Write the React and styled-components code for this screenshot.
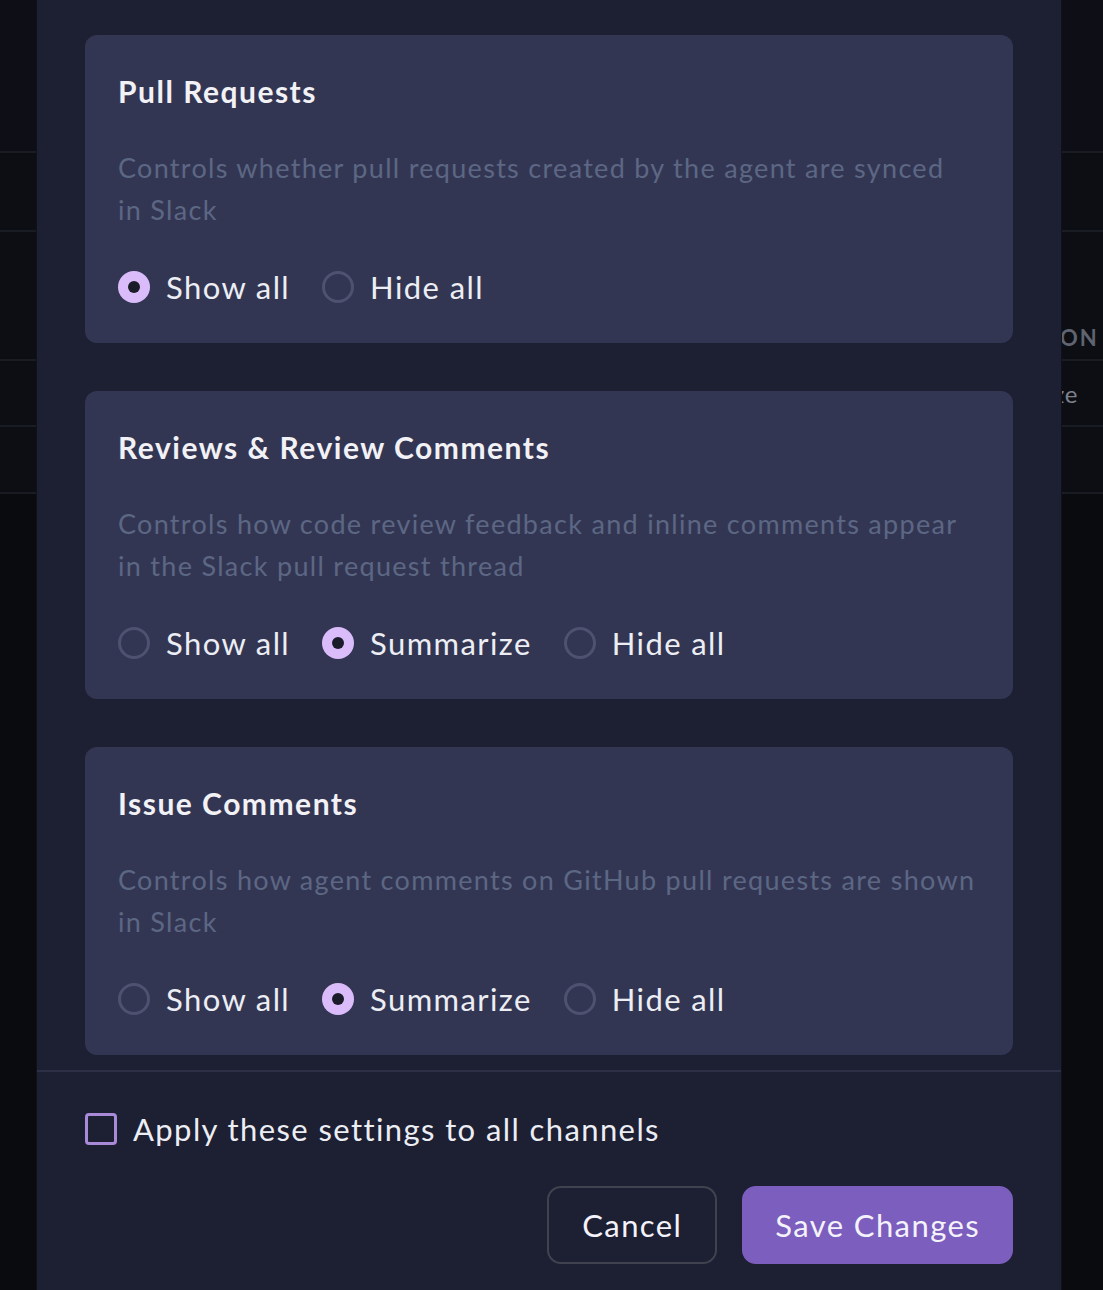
import React, { useState } from 'react';
import styled, { createGlobalStyle } from 'styled-components';

const GlobalStyle = createGlobalStyle`
  html, body {
    margin: 0;
    padding: 0;
    background: #0b0c10;
  }
  * {
    box-sizing: border-box;
  }
`

const Screen = styled.div`
  position: relative;
  width: 1103px;
  height: 1290px;
  overflow: hidden;
  font-family: Lato, "Noto Sans", sans-serif;
  background: #0a0b0e;
`

// the page that sits behind the dialog
const Backdrop = styled.div`
  display: flex;
  flex-direction: column;
`
const PageHead = styled.div`
  height: 153px;
  background: #0e0f16;
  border-bottom: 2px solid #1a1c24;
`
const BgRow = styled.div`
  height: ${p => p.$h}px;
  display: flex;
  align-items: ${p => (p.$head ? 'flex-end' : 'center')};
  padding-bottom: ${p => (p.$head ? '8px' : '0')};
  background: #0d0e14;
  border-bottom: 2px solid #1a1c24;
`
const BgCell = styled.div`
  margin-left: ${p => p.$left}px;
  color: ${p => (p.$head ? '#5f6470' : '#7d828d')};
  font-size: ${p => (p.$head ? '22px' : '24px')};
  font-weight: ${p => (p.$head ? 700 : 400)};
  letter-spacing: ${p => (p.$head ? '2px' : '0.5px')};
  text-transform: ${p => (p.$head ? 'uppercase' : 'none')};
  white-space: nowrap;
`

const Modal = styled.div`
  position: absolute;
  top: 0;
  left: 37px;
  width: 1024px;
  height: 1290px;
  background: #1d1f33;
  display: flex;
  flex-direction: column;
  box-shadow: 0 0 0 1px #111219;
`
const Body = styled.div`
  display: flex;
  flex-direction: column;
  gap: 48px;
  padding: 35px 48px 15px;
`
const Card = styled.section`
  background: #333653;
  border-radius: 12px;
  padding: 36px 33px 40px;
`
const Title = styled.h3`
  margin: 0;
  font-size: 30px;
  line-height: 40px;
  font-weight: 700;
  color: #f1f1f6;
  letter-spacing: 1.5px;
`
const Description = styled.p`
  margin: 36px 0 40px;
  font-size: 27px;
  line-height: 42px;
  color: #5c6784;
  letter-spacing: 1.3px;
  white-space: pre-line;
`
const Options = styled.div`
  display: flex;
  align-items: center;
  gap: 32px;
`
const Option = styled.label`
  display: flex;
  align-items: center;
  gap: 16px;
  cursor: pointer;
  font-size: 31px;
  line-height: 32px;
  color: #eceef4;
  letter-spacing: 1.4px;
`
const RadioDot = styled.span`
  width: 32px;
  height: 32px;
  border-radius: 50%;
  flex-shrink: 0;
  display: flex;
  align-items: center;
  justify-content: center;
  background: ${p => (p.$on ? '#dbbcfb' : 'transparent')};
  border: ${p => (p.$on ? 'none' : '3px solid #4e5270')};

  &::after {
    content: '';
    display: ${p => (p.$on ? 'block' : 'none')};
    width: 12px;
    height: 12px;
    border-radius: 50%;
    background: #1b1c2a;
  }
`

const Footer = styled.div`
  border-top: 2px solid #2c2f45;
  padding: 39px 48px 26px;
  display: flex;
  flex-direction: column;
  gap: 39px;
`
const CheckRow = styled.label`
  display: flex;
  align-items: center;
  gap: 16px;
  height: 36px;
  font-size: 31px;
  color: #eceef4;
  letter-spacing: 1.4px;
  cursor: pointer;
`
const CheckBox = styled.span`
  width: 32px;
  height: 32px;
  border: 3px solid #a88ad8;
  border-radius: 4px;
  flex-shrink: 0;
`
const Actions = styled.div`
  display: flex;
  justify-content: flex-end;
  gap: 25px;
`
const Button = styled.button`
  height: 78px;
  padding: 0 ${p => (p.$primary ? '31px' : '33px')};
  border-radius: 14px;
  font-family: inherit;
  font-size: 31px;
  letter-spacing: 1.4px;
  color: #f4f2fa;
  background: ${p => (p.$primary ? '#7b5ebd' : 'transparent')};
  border: ${p => (p.$primary ? '2px solid #7b5ebd' : '2px solid #40434f')};
  cursor: pointer;
`

const sections = [
  {
    title: 'Pull Requests',
    text: 'Controls whether pull requests created by the agent are synced\nin Slack',
    options: ['Show all', 'Hide all'],
    value: 'Show all',
  },
  {
    title: 'Reviews & Review Comments',
    text: 'Controls how code review feedback and inline comments appear\nin the Slack pull request thread',
    options: ['Show all', 'Summarize', 'Hide all'],
    value: 'Summarize',
  },
  {
    title: 'Issue Comments',
    text: 'Controls how agent comments on GitHub pull requests are shown\nin Slack',
    options: ['Show all', 'Summarize', 'Hide all'],
    value: 'Summarize',
  },
]

const App = () => {
  const [values, setValues] = useState(sections.map(s => s.value))

  return (
    <Screen>
      <GlobalStyle />
      <Backdrop>
        <PageHead />
        <BgRow $h={79} />
        <BgRow $h={129} $head>
          <BgCell $head $left={1003}>Action</BgCell>
        </BgRow>
        <BgRow $h={66}>
          <BgCell $left={958}>Summarize</BgCell>
        </BgRow>
        <BgRow $h={67} />
      </Backdrop>

      <Modal>
        <Body>
          {sections.map((s, i) => (
            <Card key={s.title}>
              <Title>{s.title}</Title>
              <Description>{s.text}</Description>
              <Options>
                {s.options.map(o => (
                  <Option
                    key={o}
                    onClick={() => setValues(v => v.map((x, j) => (j === i ? o : x)))}
                  >
                    <RadioDot $on={values[i] === o} />
                    {o}
                  </Option>
                ))}
              </Options>
            </Card>
          ))}
        </Body>
        <Footer>
          <CheckRow>
            <CheckBox />
            Apply these settings to all channels
          </CheckRow>
          <Actions>
            <Button>Cancel</Button>
            <Button $primary>Save Changes</Button>
          </Actions>
        </Footer>
      </Modal>
    </Screen>
  )
}

export default App;
